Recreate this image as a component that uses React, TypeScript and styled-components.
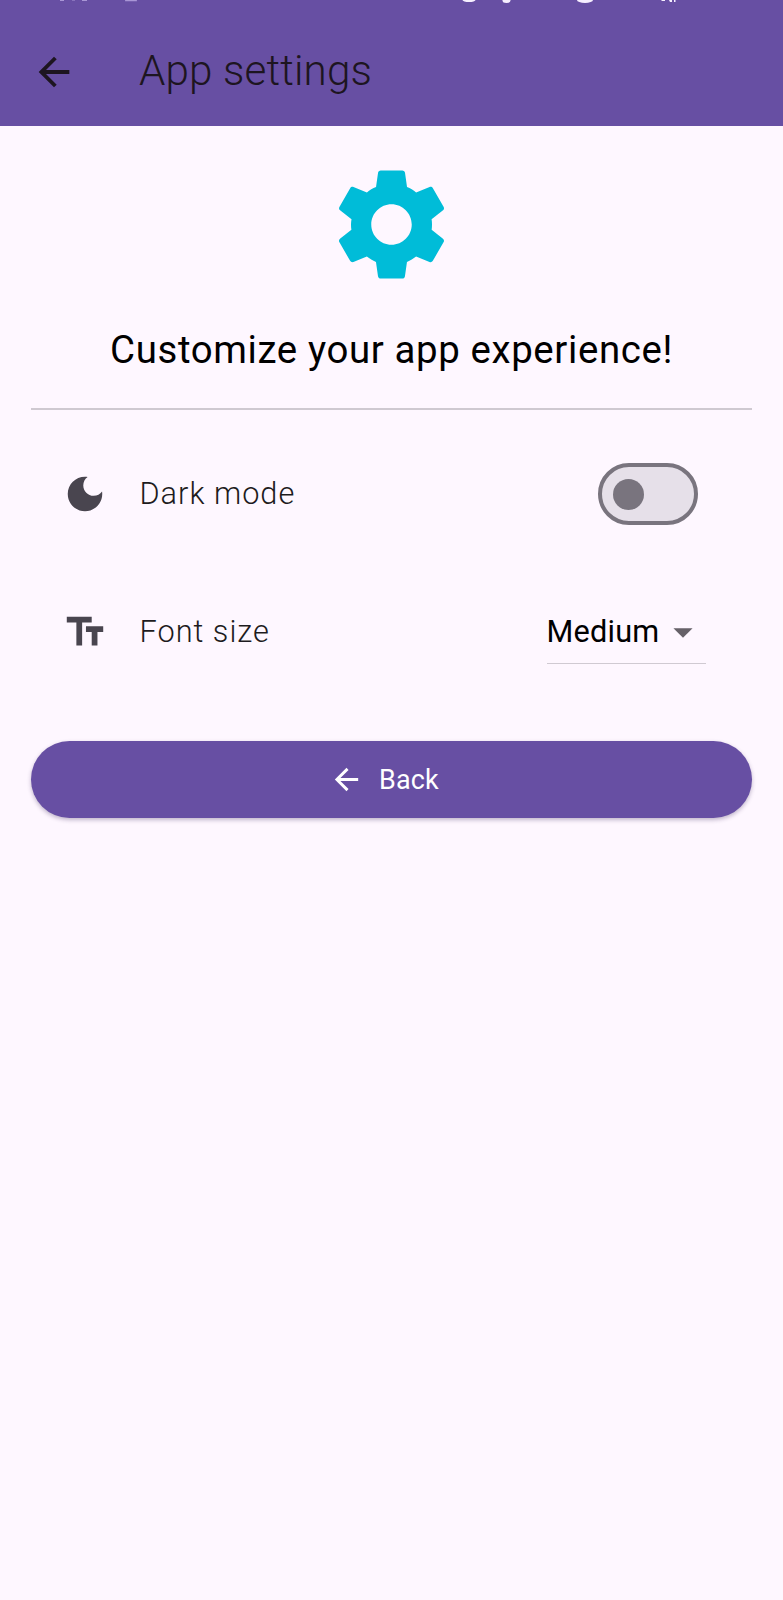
import React, { useState } from "react";
import styled, { createGlobalStyle } from "styled-components";

const GlobalStyle = createGlobalStyle`
  * { box-sizing: border-box; }
  body { margin: 0; background: #fef7ff; font-family: Roboto, sans-serif; }
  button { font-family: inherit; border: 0; padding: 0; background: none; }
`;

const Screen = styled.main`
  min-height: 1600px;
  background: #fef7ff;
  color: #1d1b20;
`;

const AppBar = styled.header`
  position: relative;
  display: flex;
  align-items: center;
  height: 126px;
  padding: 18px 31px 0;
  background: #674fa3;
`;

const StatusStrip = styled.svg`
  position: absolute;
  top: 0;
  left: 0;
`;

const IconButton = styled.button`
  display: flex;
  color: #1d1520;
`;

const Title = styled.h1`
  margin: 0 0 2px 62px;
  color: #1d1520;
  font-size: 42.2px;
  font-weight: 300;
  line-height: 54px;
  letter-spacing: 0.15px;
  white-space: nowrap;
`;

const Content = styled.section`
  display: flex;
  flex-direction: column;
  padding: 30.5px 31px 0;
`;

const Hero = styled.div`
  display: flex;
  flex-direction: column;
  align-items: center;
  height: 251.5px;
  color: #00bcd8;
`;

const Headline = styled.h2`
  margin: 30px 0 0;
  color: #000;
  font-size: 38.4px;
  font-weight: 400;
  line-height: 56px;
  letter-spacing: 0.62px;
  white-space: nowrap;
`;

const Divider = styled.hr`
  width: 100%;
  height: 2px;
  margin: 0;
  border: 0;
  background: #cfc9d1;
`;

const Row = styled.div<{ $height: number }>`
  display: flex;
  align-items: center;
  height: ${({ $height }) => $height}px;
  padding: 0 46px 0 31px;
`;

const RowIcon = styled.span`
  display: flex;
  color: #49454f;
`;

const RowLabel = styled.span`
  flex: 1;
  margin-left: 31.5px;
  font-size: 30.7px;
  font-weight: 300;
  line-height: 46px;
  letter-spacing: 1px;
`;

const Switch = styled.button<{ $on: boolean }>`
  display: flex;
  align-items: center;
  justify-content: ${({ $on }) => ($on ? "flex-end" : "flex-start")};
  width: 100px;
  height: 62px;
  margin-right: 8px;
  padding: 0 11px;
  border: 4px solid #79747e;
  border-radius: 31px;
  background: #e6e0e9;
`;

const Thumb = styled.span`
  width: 31px;
  height: 31px;
  border-radius: 50%;
  background: #79747e;
`;

const Select = styled.button`
  display: flex;
  align-items: center;
  justify-content: space-between;
  width: 159.5px;
  height: 63px;
  border-bottom: 1px solid #d0cad2;
  color: #000;
  font-size: 30.7px;
  font-weight: 400;
  line-height: 46px;
  letter-spacing: 0.22px;
`;

const SelectArrow = styled.span`
  display: flex;
  color: #666168;
`;

const Spacer = styled.div`
  height: 55px;
`;

const BackButton = styled.button`
  display: flex;
  align-items: center;
  justify-content: center;
  gap: 15px;
  height: 77px;
  padding-right: 15px;
  border-radius: 39px;
  background: #674fa3;
  box-shadow: 0 2px 4px rgba(60, 40, 90, 0.32);
  color: #fff;
  font-size: 26.9px;
  font-weight: 400;
  letter-spacing: 0.19px;
`;

const icons = {
  back: "M20 11H7.83l5.59-5.59L12 4l-8 8 8 8 1.41-1.41L7.83 13H20v-2z",
  gear: "M19.14 12.94c.04-.3.06-.61.06-.94 0-.32-.02-.64-.07-.94l2.03-1.58c.18-.14.23-.41.12-.61l-1.92-3.32c-.12-.22-.37-.29-.59-.22l-2.39.96c-.5-.38-1.03-.7-1.62-.94l-.36-2.54c-.04-.24-.24-.41-.48-.41h-3.84c-.24 0-.43.17-.47.41l-.36 2.54c-.59.24-1.13.57-1.62.94l-2.39-.96c-.22-.08-.47 0-.59.22L2.74 8.87c-.12.21-.08.47.12.61l2.03 1.58c-.05.3-.09.63-.09.94s.02.64.07.94l-2.03 1.58c-.18.14-.23.41-.12.61l1.92 3.32c.12.22.37.29.59.22l2.39-.96c.5.38 1.03.7 1.62.94l.36 2.54c.05.24.24.41.48.41h3.84c.24 0 .44-.17.47-.41l.36-2.54c.59-.24 1.13-.56 1.62-.94l2.39.96c.22.08.47 0 .59-.22l1.92-3.32c.12-.22.07-.47-.12-.61l-2.01-1.58zM12 15.6c-1.98 0-3.6-1.62-3.6-3.6s1.62-3.6 3.6-3.6 3.6 1.62 3.6 3.6-1.62 3.6-3.6 3.6z",
  moon: "M12 3c-4.97 0-9 4.03-9 9s4.03 9 9 9 9-4.03 9-9c0-.46-.04-.92-.1-1.36-.98 1.37-2.58 2.26-4.4 2.26-2.98 0-5.4-2.42-5.4-5.4 0-1.81.89-3.42 2.26-4.4-.44-.06-.9-.1-1.36-.1z",
  textSize: "M2.5 4v3h5v12h3V7h5V4h-13zm19 5h-9v3h3v7h3v-7h3V9z",
  dropDown: "M7 10l5 5 5-5z",
};

function Icon({ name, size = 46 }: { name: keyof typeof icons; size?: number }) {
  return (
    <svg width={size} height={size} viewBox="0 0 24 24" fill="currentColor" aria-hidden="true">
      <path d={icons[name]} />
    </svg>
  );
}

export default function App() {
  const [dark, setDark] = useState(false);

  return (
    <>
      <GlobalStyle />
      <Screen>
        <AppBar>
          <StatusStrip width="783" height="4" viewBox="0 0 783 4" aria-hidden="true">
            <g fill="#a996d6">
              <rect x="60" width="4" height="1" />
              <rect x="72" width="3" height="1" opacity=".5" />
              <rect x="82" width="5" height="1" />
              <rect x="125" width="12" height="1.3" rx=".6" />
            </g>
            <g fill="#f6efff">
              <ellipse cx="469" cy="0" rx="6.5" ry="2" />
              <ellipse cx="506.5" cy="0.5" rx="4" ry="2.5" />
              <ellipse cx="585" cy="0" rx="8" ry="3" />
              <path d="M661 0h4v1h-3zM669 0h3v2h-2zM674 0h1.5v2H674z" />
            </g>
          </StatusStrip>
          <IconButton aria-label="Back">
            <Icon name="back" />
          </IconButton>
          <Title>App settings</Title>
        </AppBar>
        <Content>
          <Hero>
            <Icon name="gear" size={135} />
            <Headline>Customize your app experience!</Headline>
          </Hero>
          <Divider />
          <Row $height={168}>
            <RowIcon>
              <Icon name="moon" />
            </RowIcon>
            <RowLabel>Dark mode</RowLabel>
            <Switch
              $on={dark}
              role="switch"
              aria-checked={dark}
              aria-label="Dark mode"
              onClick={() => setDark(!dark)}
            >
              <Thumb />
            </Switch>
          </Row>
          <Row $height={108}>
            <RowIcon>
              <Icon name="textSize" />
            </RowIcon>
            <RowLabel>Font size</RowLabel>
            <Select>
              Medium
              <SelectArrow>
                <Icon name="dropDown" />
              </SelectArrow>
            </Select>
          </Row>
          <Spacer />
          <BackButton>
            <Icon name="back" size={35} />
            Back
          </BackButton>
        </Content>
      </Screen>
    </>
  );
}
